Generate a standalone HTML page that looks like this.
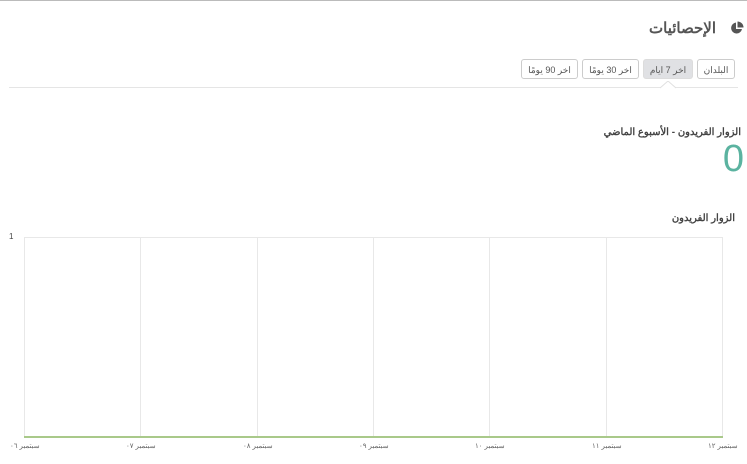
<!DOCTYPE html>
<html><head><meta charset="utf-8"><style>
body{margin:0;width:747px;height:464px;background:#fff;position:relative;overflow:hidden;font-family:"Liberation Sans","Noto Sans CJK SC",sans-serif;color:#444}
.a{position:absolute}
.btn{position:absolute;top:59px;height:20px;border:1px solid #ccc;border-radius:3px;background:#fff;font-size:9px;line-height:20px;text-align:center;color:#555;box-sizing:border-box}
.g{position:absolute;top:237px;width:1px;height:200px;background:#e8e8e8}
.x{position:absolute;top:442px;font-size:7px;color:#666;white-space:nowrap}
</style></head><body>
<div class="a" style="left:0;top:0;width:747px;height:1px;background:#bbb"></div>
<div class="a" style="right:31px;top:19px;font-size:15px;font-weight:bold;color:#555" dir="rtl">الإحصائيات</div>
<svg class="a" style="left:730px;top:21px" width="14" height="14" viewBox="0 0 14 14"><path d="M6 1.5A5.5 5.5 0 1 0 12 8H6Z" fill="#555"/><path d="M7.5 0.5V6.5H13.5A6 6 0 0 0 7.5 0.5Z" fill="#555"/></svg>
<div class="btn" style="left:697px;width:38px">البلدان</div>
<div class="btn" style="left:643px;width:50px;background:#e0e1e4;border-color:#dcdcdc">اخر 7 ايام</div>
<div class="btn" style="left:582px;width:57px">اخر 30 يومًا</div>
<div class="btn" style="left:521px;width:57px">اخر 90 يومًا</div>
<div class="a" style="left:9px;top:87px;width:729px;height:1px;background:#e5e5e5"></div>
<svg class="a" style="left:660px;top:81px" width="16" height="8"><path d="M0 7L8 0L16 7" fill="#fff" stroke="#e0e0e0"/></svg>
<div class="a" style="right:6px;top:127px;font-size:10px;font-weight:bold;color:#444" dir="rtl">الزوار الفريدون - الأسبوع الماضي</div>
<div class="a" style="right:3px;top:137px;font-size:38px;color:#5bb3a0;line-height:44px">0</div>
<div class="a" style="right:12px;top:213px;font-size:10px;font-weight:bold;color:#444" dir="rtl">الزوار الفريدون</div>
<div class="a" style="left:9px;top:232px;font-size:8px;color:#444">1</div>
<div class="a" style="left:24px;top:237px;width:698px;height:1px;background:#e8e8e8"></div>
<div class="g" style="left:24px"></div><div class="g" style="left:140px"></div><div class="g" style="left:257px"></div><div class="g" style="left:373px"></div><div class="g" style="left:489px"></div><div class="g" style="left:606px"></div><div class="g" style="left:722px"></div>
<div class="a" style="left:24px;top:436px;width:699px;height:2px;background:#a9c98a"></div>
<div class="x" style="left:10px">سبتمبر ٠٦</div>
<div class="x" style="left:126px">سبتمبر ٠٧</div>
<div class="x" style="left:243px">سبتمبر ٠٨</div>
<div class="x" style="left:359px">سبتمبر ٠٩</div>
<div class="x" style="left:475px">سبتمبر ١٠</div>
<div class="x" style="left:592px">سبتمبر ١١</div>
<div class="x" style="left:708px">سبتمبر ١٢</div>
</body></html>
